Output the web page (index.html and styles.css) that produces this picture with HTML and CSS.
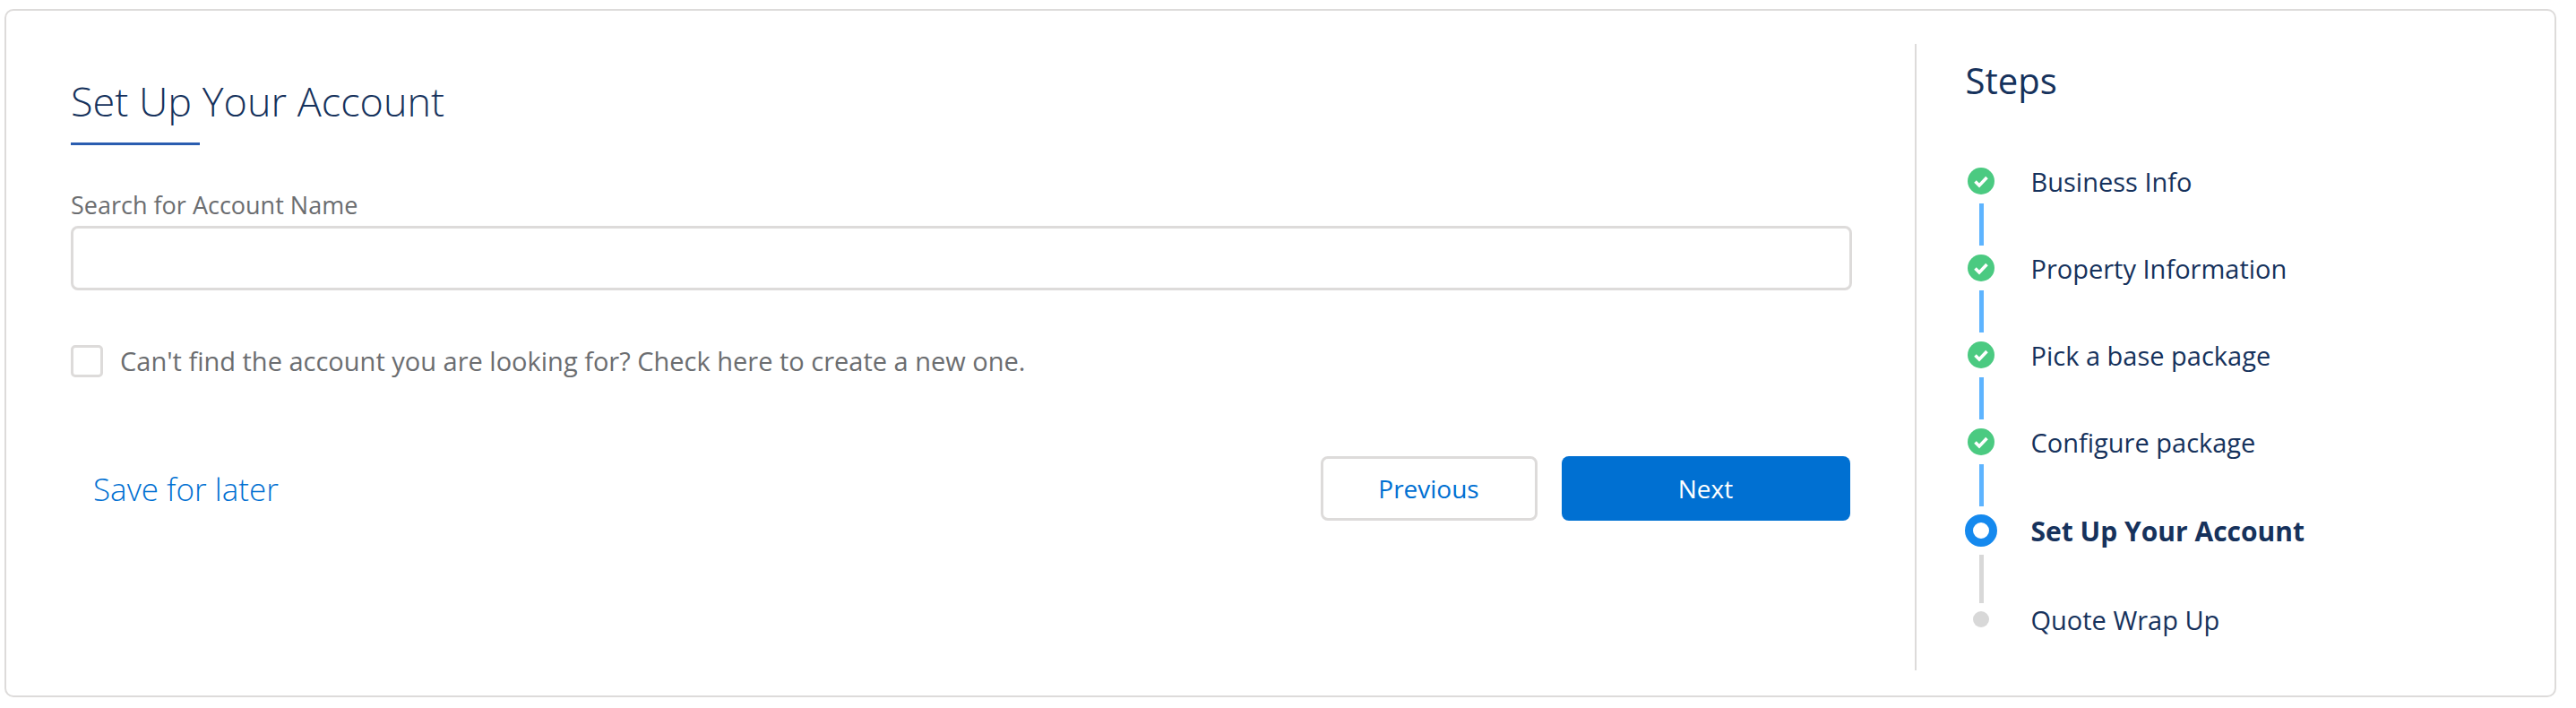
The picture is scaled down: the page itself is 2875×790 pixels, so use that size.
FILE: index.html
```html
<!DOCTYPE html>
<html lang="en">
  <head>
    <meta charset="UTF-8" />
    <meta name="viewport" content="width=device-width, initial-scale=1.0" />
    <title>Set Up Your Account</title>
    <link rel="stylesheet" href="styles.css">
  </head>
  <body>
    <div class="card">
      <div class="main">
        <h1 class="title">Set Up Your Account</h1>
        <label class="field-label" for="account">Search for Account Name</label>
        <input class="field-input" id="account" type="text" />
        <label class="check-row">
          <span class="check-box"></span>
          <span>Can't find the account you are looking for? Check here to create a new one.</span>
        </label>
        <div class="actions">
          <a class="save-link" href="#">Save for later</a>
          <div class="buttons">
            <button class="btn btn-outline">Previous</button>
            <button class="btn btn-primary">Next</button>
          </div>
        </div>
      </div>
      <div class="side">
        <h2 class="side-title">Steps</h2>
        <ul class="steps">
          <li class="step">
            <span class="marker">
              <svg class="done" viewBox="0 0 30 30"><circle cx="15" cy="15" r="15" /><path d="M8.5 15.5l4.5 4.5 8.5-9" /></svg>
            </span>
            Business Info
          </li>
          <li class="line"></li>
          <li class="step">
            <span class="marker">
              <svg class="done" viewBox="0 0 30 30"><circle cx="15" cy="15" r="15" /><path d="M8.5 15.5l4.5 4.5 8.5-9" /></svg>
            </span>
            Property Information
          </li>
          <li class="line"></li>
          <li class="step">
            <span class="marker">
              <svg class="done" viewBox="0 0 30 30"><circle cx="15" cy="15" r="15" /><path d="M8.5 15.5l4.5 4.5 8.5-9" /></svg>
            </span>
            Pick a base package
          </li>
          <li class="line"></li>
          <li class="step">
            <span class="marker">
              <svg class="done" viewBox="0 0 30 30"><circle cx="15" cy="15" r="15" /><path d="M8.5 15.5l4.5 4.5 8.5-9" /></svg>
            </span>
            Configure package
          </li>
          <li class="line line-last"></li>
          <li class="step step-active">
            <span class="marker"><span class="ring"></span></span>
            Set Up Your Account
          </li>
          <li class="line line-todo"></li>
          <li class="step step-todo">
            <span class="marker"><span class="dot"></span></span>
            Quote Wrap Up
          </li>
        </ul>
      </div>
    </div>
  </body>
</html>
```

FILE: styles.css
```css
body {
  margin: 0;
  padding: 10px 0 0 5px;
  background-color: #fff;
  font-family: "Open Sans", sans-serif;
}

.card {
  display: flex;
  box-sizing: border-box;
  width: 2848px;
  height: 768px;
  border: 2px solid #dddbda;
  border-radius: 10px;
  background-color: #fff;
}

.main {
  box-sizing: border-box;
  width: 2131px;
  padding: 73px 70px 0 72px;
}

.title {
  margin: 0;
  font-size: 45px;
  line-height: 56px;
  font-weight: 300;
  color: #16325c;
}

.title::after {
  content: "";
  display: block;
  width: 144px;
  height: 3px;
  margin-top: 18px;
  background-color: #2a5db0;
}

.field-label {
  display: block;
  margin-top: 50px;
  font-size: 27px;
  line-height: 34px;
  color: #6b6d70;
}

.field-input {
  display: block;
  box-sizing: border-box;
  width: 100%;
  height: 72px;
  margin-top: 6px;
  border: 3px solid #dddbda;
  border-radius: 8px;
  background-color: #fff;
}

.check-row {
  display: flex;
  align-items: center;
  gap: 19px;
  margin-top: 61px;
  font-size: 29px;
  line-height: 36px;
  color: #6b6d70;
}

.check-box {
  box-sizing: border-box;
  width: 36px;
  height: 36px;
  border: 3px solid #dddbda;
  border-radius: 5px;
}

.actions {
  display: flex;
  justify-content: space-between;
  align-items: center;
  margin-top: 88px;
}

.save-link {
  margin-left: 25px;
  font-size: 35px;
  font-weight: 300;
  color: #0070d2;
  text-decoration: none;
}

.buttons {
  display: flex;
  gap: 27px;
  margin-right: 2px;
}

.btn {
  box-sizing: border-box;
  height: 72px;
  border-radius: 8px;
  font-family: inherit;
  font-size: 28px;
}

.btn-outline {
  width: 242px;
  border: 3px solid #dddbda;
  background-color: #fff;
  color: #0070d2;
}

.btn-primary {
  width: 322px;
  border: none;
  background-color: #0070d2;
  color: #fff;
}

.side {
  box-sizing: border-box;
  width: 715px;
  height: 699px;
  margin-top: 37px;
  padding-left: 55px;
  border-left: 2px solid #dddbda;
}

.side-title {
  margin: 0;
  padding-top: 14px;
  font-size: 40px;
  line-height: 54px;
  font-weight: 400;
  color: #16325c;
}

.steps {
  margin: 70px 0 0;
  padding: 0;
  list-style: none;
  font-size: 29px;
  color: #16325c;
}

.step {
  display: flex;
  align-items: center;
  height: 30px;
  margin-left: -1px;
}

.marker {
  display: flex;
  justify-content: center;
  width: 36px;
  margin-right: 38px;
}

.done {
  display: block;
  width: 30px;
  height: 30px;
}

.done circle {
  fill: #4bca81;
}

.done path {
  fill: none;
  stroke: #fff;
  stroke-width: 3.6;
}

.line {
  width: 5px;
  height: 47px;
  margin: 10px 0 10px 15px;
  background-color: #5eb4ff;
}

.line-last {
  margin-bottom: 9px;
}

.line-todo {
  height: 54px;
  margin: 9px 0 9px 15px;
  background-color: #d8d8d8;
}

.step-active {
  height: 36px;
  font-size: 30px;
  font-weight: 700;
}

.ring {
  box-sizing: border-box;
  width: 36px;
  height: 36px;
  border: 9px solid #1589ee;
  border-radius: 50%;
}

.step-todo {
  height: 18px;
}

.dot {
  width: 18px;
  height: 18px;
  border-radius: 50%;
  background-color: #d8d8d8;
}
```
